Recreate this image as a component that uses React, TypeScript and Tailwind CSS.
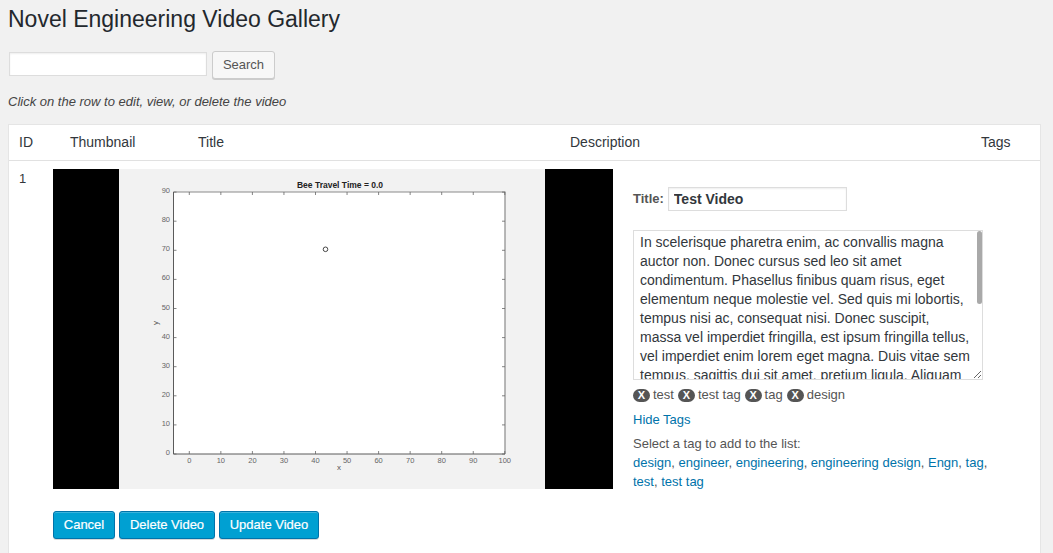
import React from "react";

const xTicks = [0, 10, 20, 30, 40, 50, 60, 70, 80, 90, 100];
const yTicks = [0, 10, 20, 30, 40, 50, 60, 70, 80, 90];
const tags = ["test", "test tag", "tag", "design"];
const tagLinks = ["design", "engineer", "engineering", "engineering design", "Engn", "tag", "test", "test tag"];

const description =
  "In scelerisque pharetra enim, ac convallis magna auctor non. Donec cursus sed leo sit amet condimentum. Phasellus finibus quam risus, eget elementum neque molestie vel. Sed quis mi lobortis, tempus nisi ac, consequat nisi. Donec suscipit, massa vel imperdiet fringilla, est ipsum fringilla tellus, vel imperdiet enim lorem eget magna. Duis vitae sem tempus, sagittis dui sit amet, pretium ligula. Aliquam erat volutpat. Nulla facilisi. Vivamus vel sapien at nibh tincidunt posuere. Cras a lectus sed justo dapibus lacinia. Integer non velit at mi feugiat gravida. Sed ut nunc vitae orci aliquet pulvinar in at lacus. Morbi vel tortor sed ipsum ornare iaculis. Praesent nec metus quis arcu viverra congue.";

function xPos(v: number) {
  return 189.3 + v * 3.155;
}

function yPos(v: number) {
  return 454 - v * 2.91;
}

function Plot() {
  return (
    <svg viewBox="119 169 426 320" className="w-[426px] h-[320px] bg-[#f2f2f2] block">
      <rect x="173.5" y="192" width="331.5" height="262" fill="#fff" />
      <path d="M173.5 192H505V454" fill="none" stroke="#8a8a8a" strokeWidth="1.2" />
      <path d="M173.5 192V454H505" fill="none" stroke="#5a5a5a" strokeWidth="1" />
      {xTicks.map((v) => (
        <g key={v}>
          <path d={`M${xPos(v)} 454v-3M${xPos(v)} 192v3`} stroke="#666" strokeWidth="0.8" />
          <text x={xPos(v)} y="463" textAnchor="middle" fontSize="7.5" fill="#666">
            {v}
          </text>
        </g>
      ))}
      {yTicks.map((v) => (
        <g key={v}>
          <path d={`M173.5 ${yPos(v)}h3M505 ${yPos(v)}h-3`} stroke="#666" strokeWidth="0.8" />
          <text x="170" y={yPos(v) + 1} textAnchor="end" fontSize="7.5" fill="#666">
            {v}
          </text>
        </g>
      ))}
      <text x="340" y="188" textAnchor="middle" fontSize="8.5" fontWeight="bold" fill="#222">
        Bee Travel Time = 0.0
      </text>
      <text x="339" y="470" textAnchor="middle" fontSize="8" fill="#555">
        x
      </text>
      <text x="158" y="323" textAnchor="middle" fontSize="8" fill="#555" transform="rotate(-90 158 323)">
        y
      </text>
      <circle cx="325.5" cy="249.3" r="2.3" fill="none" stroke="#333" strokeWidth="0.9" />
    </svg>
  );
}

function PrimaryButton({ label, width }: { label: string; width: string }) {
  return (
    <button
      className={`${width} h-[28px] rounded-[3px] border border-[#0073aa] bg-[#00a0d2] text-[13px] text-white [-webkit-text-stroke:0.2px_white] shadow-[inset_0_1px_0_rgba(120,200,230,0.5),0_1px_0_rgba(0,0,0,0.15)]`}
    >
      {label}
    </button>
  );
}

export default function App() {
  return (
    <div className="h-screen overflow-hidden bg-[#f1f1f1] pl-[8px] pr-[12px] font-['Liberation_Sans',Arial,sans-serif] text-[13px] text-[#444]">
      <h1 className="pt-[6px] text-[23px] leading-[26px] font-normal text-[#23282d]">
        Novel Engineering Video Gallery
      </h1>

      {/* Search */}
      <div className="mt-[19px] ml-[1px] flex items-start gap-[5px]">
        <input className="mt-[1px] w-[198px] h-[24px] border border-[#ddd] bg-white shadow-[inset_0_1px_2px_rgba(0,0,0,0.07)]" />
        <button className="w-[63px] h-[28px] rounded-[3px] border border-[#ccc] bg-[#f7f7f7] text-[13px] text-[#555] shadow-[0_1px_0_#ccc]">
          Search
        </button>
      </div>

      <p className="mt-[13px] text-[13px] leading-[19px] italic text-[#444]">
        Click on the row to edit, view, or delete the video
      </p>

      <div className="mt-[13px] border border-[#e5e5e5] bg-white h-[500px]">
        {/* Table header */}
        <div className="flex h-[36px] items-center border-b border-[#e1e1e1] text-[14px] text-[#32373c]">
          <div className="pl-[10px] w-[61px]">ID</div>
          <div className="w-[128px]">Thumbnail</div>
          <div className="w-[372px]">Title</div>
          <div className="w-[411px]">Description</div>
          <div>Tags</div>
        </div>

        {/* Video row */}
        <div className="flex">
          <div className="w-[44px] pl-[10px] pt-[8px] leading-[19px] text-[#32373c]">1</div>
          <div className="pt-[8px]">
            <div className="flex w-[560px] h-[320px] pl-[66px] bg-black">
              <Plot />
            </div>
            <div className="mt-[22px] flex gap-[4px]">
              <PrimaryButton label="Cancel" width="w-[62px]" />
              <PrimaryButton label="Delete Video" width="w-[96px]" />
              <PrimaryButton label="Update Video" width="w-[100px]" />
            </div>
          </div>

          <div className="pl-[20px] pt-[26px] w-[370px]">
            <div className="flex items-center gap-[4px]">
              <label className="font-bold text-[#555]">Title:</label>
              <input
                defaultValue="Test Video"
                className="w-[179px] h-[24px] border border-[#ddd] pl-[5px] text-[14px] font-bold text-[#32373c] shadow-[inset_0_1px_2px_rgba(0,0,0,0.07)]"
              />
            </div>

            <div className="relative mt-[19px] w-[350px]">
              <textarea
                defaultValue={description}
                className="block w-[350px] h-[150px] border border-[#ddd] pl-[6px] pt-[2px] pr-[10px] text-[14px] leading-[19px] text-[#32373c] overflow-hidden"
              />
              {/* scrollbar thumb */}
              <div className="absolute right-[1px] top-[1px] h-[73px] w-[5px] rounded-full bg-[#a9a9a9]" />
            </div>

            <div className="mt-[7px] flex items-center leading-[16px] text-[#555]">
              {tags.map((tag) => (
                <span key={tag} className="mr-[4px] flex items-center">
                  <span className="mr-[3px] flex h-[13px] w-[17px] items-center justify-center rounded-full bg-[#555] text-[11px] font-bold text-white">
                    X
                  </span>
                  {tag}
                </span>
              ))}
            </div>

            <a className="mt-[7px] block leading-[19px] text-[#0073aa]">Hide Tags</a>

            <p className="mt-[5px] leading-[19px] text-[#555]">Select a tag to add to the list:</p>
            <p className="w-[360px] leading-[19px] text-[#555]">
              {tagLinks.map((link, i) => (
                <span key={link}>
                  <a className="text-[#0073aa]">{link}</a>
                  {i < tagLinks.length - 1 ? ", " : ""}
                </span>
              ))}
            </p>
          </div>
        </div>
      </div>
    </div>
  );
}
